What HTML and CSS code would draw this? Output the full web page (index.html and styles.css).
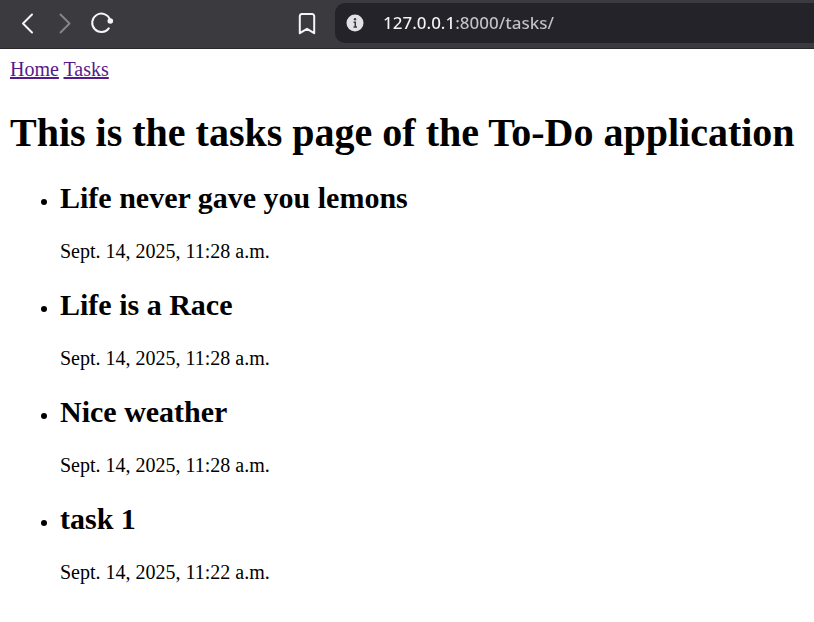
FILE: index.html
```html
<!DOCTYPE html>
<html lang="en">
<head>
<meta charset="utf-8">
<title>Tasks</title>
<link rel="stylesheet" href="styles.css">
</head>
<body>
<header class="toolbar">
  <div class="nav-buttons">
    <button class="icon-button" type="button" aria-label="Back">
      <svg width="24" height="24" viewBox="0 0 24 24"><path d="M16 3.500 7 12.500l9 9"/></svg>
    </button>
    <button class="icon-button is-disabled" type="button" aria-label="Forward" disabled>
      <svg width="24" height="24" viewBox="0 0 24 24"><path d="m7.500 3.500 9 9-9 9"/></svg>
    </button>
    <button class="icon-button" type="button" aria-label="Reload">
      <svg width="24" height="24" viewBox="0 0 24 24"><path d="M20 8.500a9.200 9.200 0 1 0-1.200 8.800"/><circle class="solid" cx="20.300" cy="10" r="2.800"/></svg>
    </button>
  </div>
  <button class="icon-button" type="button" aria-label="Bookmark">
    <svg width="24" height="24" viewBox="0 0 24 24"><path d="M6.500 3h10.500a2.200 2.200 0 0 1 2.200 2.200v17L12 17.800l-7.200 4.400v-17A2.200 2.200 0 0 1 6.500 3z"/></svg>
  </button>
  <div class="address">
    <svg class="info" width="18" height="18" viewBox="0 0 18 18" aria-hidden="true"><circle class="disc" cx="9" cy="9" r="8.500"/><path class="mark" d="M7.500 8.200h1.800v4.800M7.500 13h3.500"/><circle class="dot" cx="9" cy="5.200" r="1.200"/></svg>
    <input class="url" type="text" value="127.0.0.1:8000/tasks/" aria-label="Address">
  </div>
</header>
<main class="page">
  <nav><a href="#home">Home</a> <a href="#tasks">Tasks</a></nav>
  <h1>This is the tasks page of the To-Do application</h1>
  <ul>
    <li><h2>Life never gave you lemons</h2><p>Sept. 14, 2025, 11:28 a.m.</p></li>
    <li><h2>Life is a Race</h2><p>Sept. 14, 2025, 11:28 a.m.</p></li>
    <li><h2>Nice weather</h2><p>Sept. 14, 2025, 11:28 a.m.</p></li>
    <li><h2>task 1</h2><p>Sept. 14, 2025, 11:22 a.m.</p></li>
  </ul>
</main>
</body>
</html>
```
FILE: styles.css
```css
* { box-sizing: border-box; }

body {
  margin: 0;
  background: #fff;
  color: #000;
  font-family: "Liberation Serif", serif;
  font-size: 20px;
  line-height: 23px;
}

.toolbar {
  display: flex;
  align-items: center;
  height: 49px;
  padding: 0 0 2px 16px;
  background: #3b3a3f;
  border-bottom: 1px solid #29282d;
}

.nav-buttons {
  display: flex;
  gap: 13px;
  margin-right: 181px;
}

.icon-button {
  display: flex;
  padding: 0;
  border: 0;
  background: none;
  color: #f5f5f7;
}

.icon-button.is-disabled { color: #858489; }

.icon-button path {
  fill: none;
  stroke: currentColor;
  stroke-width: 2;
  stroke-linecap: round;
  stroke-linejoin: round;
}

.solid { fill: currentColor; }

.address {
  display: flex;
  flex: 1;
  align-items: center;
  gap: 19px;
  min-width: 0;
  height: 40px;
  margin-left: 16px;
  padding-left: 11px;
  border-radius: 10px 0 0 10px;
  background: #242329;
}

.info { flex: none; }
.disc { fill: #e2e1e6; }
.mark { fill: none; stroke: #3b3a3f; stroke-width: 1.5; }
.dot { fill: #3b3a3f; }

.url {
  flex: 1;
  min-width: 0;
  padding: 0;
  border: 0;
  background: linear-gradient(90deg, #f4f4f6 72px, #c3c2c8 72px);
  -webkit-background-clip: text;
  background-clip: text;
  color: transparent;
  font: 500 17px/24px "Noto Sans", sans-serif;
  outline: 0;
}

.page { padding: 9px 10px; }

a { color: #551a8b; }

h1 {
  margin: 29px 0 25px;
  font-size: 40px;
  line-height: 46px;
}

ul {
  margin: 0;
  padding-left: 50px;
}

h2 {
  margin: 25px 0;
  font-size: 30px;
  line-height: 34px;
}

p { margin: 25px 0; }
```
